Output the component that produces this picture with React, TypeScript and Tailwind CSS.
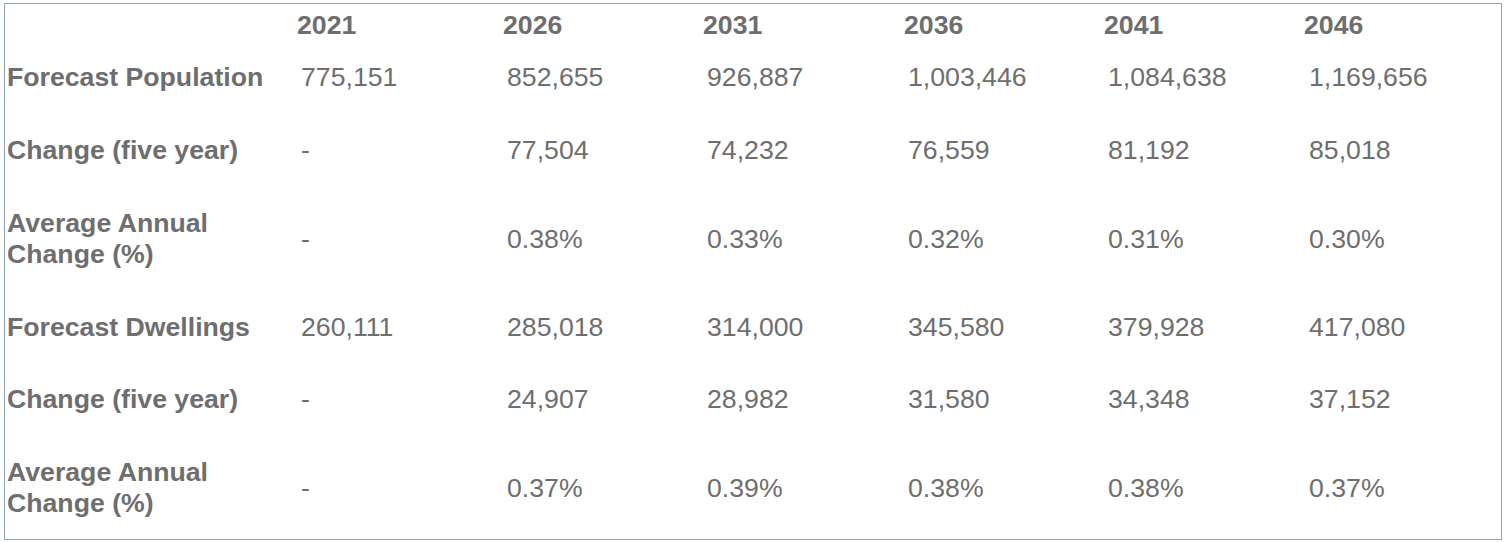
import React from "react";

const years = ["2021", "2026", "2031", "2036", "2041", "2046"];

type Row = { label: React.ReactNode; values: string[]; pb: string };

const rows: Row[] = [
  { label: "Forecast Population", values: ["775,151", "852,655", "926,887", "1,003,446", "1,084,638", "1,169,656"], pb: "pb-[36px]" },
  { label: "Change (five year)", values: ["-", "77,504", "74,232", "76,559", "81,192", "85,018"], pb: "pb-[36px]" },
  { label: <>Average Annual<br />Change (%)</>, values: ["-", "0.38%", "0.33%", "0.32%", "0.31%", "0.30%"], pb: "pb-[36px]" },
  { label: "Forecast Dwellings", values: ["260,111", "285,018", "314,000", "345,580", "379,928", "417,080"], pb: "pb-[35px]" },
  { label: "Change (five year)", values: ["-", "24,907", "28,982", "31,580", "34,348", "37,152"], pb: "pb-[36px]" },
  { label: <>Average Annual<br />Change (%)</>, values: ["-", "0.37%", "0.39%", "0.38%", "0.38%", "0.37%"], pb: "pb-[20px]" },
];

const cols = "grid grid-cols-[292px_206px_200px_201px_200px_200px_1fr]";

export default function App() {
  return (
    <div className="bg-white w-[1507px] h-[542px] pt-[3px] pl-[4px]">
      <div
        className="w-[1498px] h-[537px] border border-[#8fa3bd] overflow-hidden text-[#6e6e6e] text-[26.67px] leading-[31px]"
        style={{ fontFamily: '"Liberation Sans", Arial, sans-serif' }}
      >
        <div className={`${cols} pt-[6px] pb-[15px] font-bold`}>
          <div />
          {years.map((y) => (
            <div key={y}>{y}</div>
          ))}
        </div>
        {rows.map((r, i) => (
          <div key={i} className={`${cols} pt-[6px] ${r.pb} items-center`}>
            <div className="pl-[2px] font-bold">{r.label}</div>
            {r.values.map((v, j) => (
              <div key={j} className={j === 5 ? "pl-[5px]" : "pl-[4px]"}>
                {v}
              </div>
            ))}
          </div>
        ))}
      </div>
    </div>
  );
}
